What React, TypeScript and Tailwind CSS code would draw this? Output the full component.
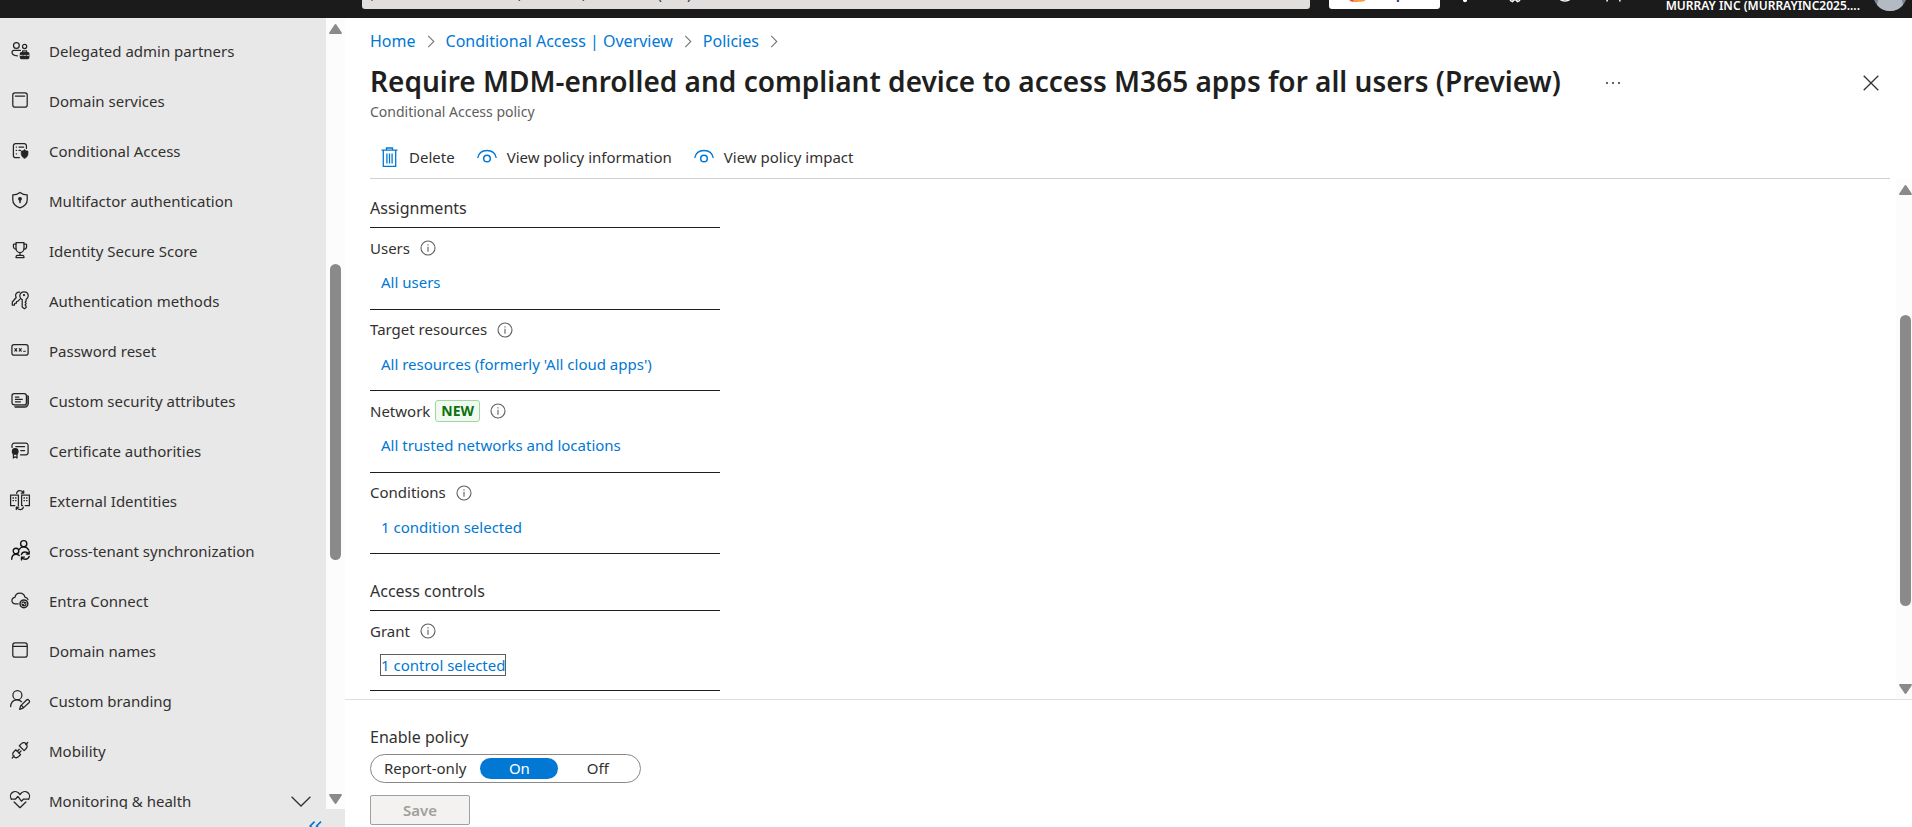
import type { ReactNode } from "react";

type IconProps = { children: ReactNode };

function NavIcon({ children }: IconProps) {
  return (
    <svg
      viewBox="0 0 20 20"
      className="size-5 shrink-0 overflow-visible"
      fill="none"
      stroke="#242424"
      strokeWidth="1.25"
      strokeLinecap="round"
      strokeLinejoin="round"
      aria-hidden="true"
    >
      {children}
    </svg>
  );
}

const navItems: { label: string; icon: ReactNode; expandable?: boolean }[] = [
  {
    label: "Delegated admin partners",
    icon: (
      <>
        <circle cx="6.4" cy="4.4" r="2.9" />
        <circle cx="14.6" cy="5.4" r="2.1" />
        <path d="M10.4 9.4H3.9A1.9 1.9 0 0 0 2 11.3c0 2.3 2 3.4 5.4 3.5" />
        <path d="M12.6 11.4V9.8h4v1.6" />
        <rect x="10.4" y="11.6" width="8.4" height="6" rx="1" fill="#242424" />
        <path d="M10.4 14.4h8.4" stroke="#e8e8e8" strokeWidth="0.8" strokeDasharray="1.8 1.5" />
      </>
    ),
  },
  {
    label: "Domain services",
    icon: (
      <>
        <rect x="2.8" y="1.8" width="14.4" height="14.4" rx="2.2" />
        <path d="M5.4 5h9.2" />
      </>
    ),
  },
  {
    label: "Conditional Access",
    icon: (
      <>
        <path d="M9.4 16.6H5.6a2.2 2.2 0 0 1-2.2-2.2V4.8a2.2 2.2 0 0 1 2.2-2.2h8.6a2.2 2.2 0 0 1 2.2 2.2v2.6" />
        <path d="M6.2 6h.3M9 6h4.6M6.2 9.4h.3M9 9.4h1.4M6.2 12.8h.3" />
        <path
          d="M14.6 8.8c1 .8 2.1 1.2 3.4 1.3v2.7c0 2.2-1.3 3.8-3.4 4.6-2.1-.8-3.4-2.4-3.4-4.6v-2.7c1.3-.1 2.4-.5 3.4-1.3z"
          fill="#242424"
          strokeWidth="0.6"
        />
      </>
    ),
  },
  {
    label: "Multifactor authentication",
    icon: (
      <>
        <path d="M10 1.4c2.2 1.6 4.6 2.4 7.2 2.5v4.9c0 3.8-2.6 6.6-7.2 8.1-4.6-1.5-7.2-4.3-7.2-8.1V3.900C5.400 3.800 7.800 3 10 1.400z" />
        <circle cx="10" cy="7.8" r="1.3" fill="#242424" />
        <path d="M10 8.6v3" strokeWidth="1.5" />
      </>
    ),
  },
  {
    label: "Identity Secure Score",
    icon: (
      <>
        <path d="M6 1.6h8v6a4 4 0 0 1-8 0z" />
        <path d="M6 3H4.200a.8.8 0 0 0-.8.8v1.600A2.800 2.800 0 0 0 6.200 8.200M14 3h1.800a.8.8 0 0 1 .8.8v1.600a2.800 2.800 0 0 1-2.800 2.800" />
        <path d="M10 11.800v2.400M6 16.600v-.6c0-1 .7-1.700 1.700-1.700h4.600c1 0 1.700.7 1.700 1.700v.6z" />
      </>
    ),
  },
  {
    label: "Authentication methods",
    icon: (
      <>
        <path d="M14 .8c2.400 0 4.200 1.700 4.200 4 0 1.600-.8 2.900-2.100 3.600v1.600l-1 1.200 1 1.300-1 1.300 1 1.300v1.300l-1.700 1.300-2.200-1.600V8.600A4.200 4.200 0 0 1 9.800 4.900C9.800 2.500 11.600.8 14 .8z" />
        <circle cx="14" cy="4" r=".5" fill="#242424" />
        <path d="M9.600 1.100C7.400.7 5.400 2.500 5.600 4.700c.1.700.3 1.300.6 1.800L2.300 11v3h2.200l.2-1.600 1.700-.2.100-1.700 1.600-.3L9.700 8.400" />
      </>
    ),
  },
  {
    label: "Password reset",
    icon: (
      <>
        <rect x="1.9" y="3.6" width="16.2" height="10.6" rx="2.2" />
        <path d="M4.800 7.700l2 2.400M6.800 7.700l-2 2.400M9.300 7.700l2 2.400M11.300 7.700l-2 2.400M13.600 10.300h1.800" strokeWidth="1.1" />
      </>
    ),
  },
  {
    label: "Custom security attributes",
    icon: (
      <>
        <rect x="2" y="2.7" width="14.4" height="11.2" rx="2.2" />
        <path d="M5.400 6h3.400M5.400 8.400h6.800M5.400 10.800h5M18.300 5.200v7.400a3.600 3.600 0 0 1-3.600 3.600H5.200" />
        <path d="M17.300 4.400v8.200a2.600 2.600 0 0 1-2.600 2.600H4.600" strokeWidth=".8" />
      </>
    ),
  },
  {
    label: "Certificate authorities",
    icon: (
      <>
        <path d="M2 6.400V4.400a2.200 2.200 0 0 1 2.200-2.200h11.700a2.200 2.200 0 0 1 2.200 2.200v7.200a2.200 2.200 0 0 1-2.200 2.200h-5.400" />
        <path d="M5.800 5.600h8.800M10.800 9.600h3.800" />
        <circle cx="5.2" cy="10.4" r="2.8" fill="#242424" />
        <path d="M3.400 12.800v4.200l1.800-1.200L7 17v-4.200" />
      </>
    ),
  },
  {
    label: "External Identities",
    icon: (
      <>
        <path d="M8.400 4H.6v10.600h4.200M8.400 4v10.600M11.600 14.600V4h7.800v10.600h-4.200M11.600 14.600h1" strokeLinejoin="miter" />
        <path d="M3 7h.4M5.600 7H6M3 9.600h.4M5.600 9.600H6M14 7h.4M16.600 7h.4M14 9.600h.4M16.600 9.600h.4" strokeWidth="1.4" />
        <path d="M6.600 2.400C7 .4 8.400-.6 10.200-.4c1.500.1 2.600 1 3.200 2.400M13.700-.2v2.400h-2.400M13.400 16.200c-.4 1.600-1.800 2.500-3.400 2.400-1.600-.1-2.700-1-3.300-2.300M6.300 18.600v-2.400h2.400" />
      </>
    ),
  },
  {
    label: "Cross-tenant synchronization",
    icon: (
      <g stroke="#111" strokeWidth="1.4">
        <circle cx="13.7" cy="2.7" r="3.1" />
        <circle cx="6" cy="10" r="2.8" />
        <path d="M1.700 18.200c.1-3 1.800-5 4.300-5 1.400 0 2.400.5 3.200 1.300M9.400 8.200c1-1.600 2.500-2.300 4.300-2.300 2.200 0 3.900 1 4.900 3" />
        <path d="M11.400 13.600c.5-1.700 2-2.700 3.900-2.600 1.400 0 2.600.7 3.500 1.800M19.200 10.200v2.900h-2.900M19.200 15.400c-.6 1.800-2 2.900-3.900 2.900-1.500 0-2.700-.7-3.500-1.900M11.500 18.900v-2.800h2.900" />
      </g>
    ),
  },
  {
    label: "Entra Connect",
    icon: (
      <>
        <path d="M8.200 12.800H5.300a3.200 3.200 0 0 1-.4-6.400C5.300 3.800 7.300 2 9.900 2s4.500 1.700 5 4.100c1.500.2 2.700 1 3.100 2.500" />
        <circle cx="13.9" cy="12.8" r="3.9" strokeWidth="1.5" />
        <path d="M11.900 12c.6-.8 1.300-1.100 2.200-1 .8 0 1.400.4 1.900 1.100h-1.600M16 13.700c-.5.8-1.200 1.200-2.100 1.100-.8 0-1.500-.4-1.900-1.100h1.600" />
      </>
    ),
  },
  {
    label: "Domain names",
    icon: (
      <>
        <rect x="2.8" y="1.8" width="14.4" height="14.4" rx="2.2" />
        <path d="M3 5.400h14" />
      </>
    ),
  },
  {
    label: "Custom branding",
    icon: (
      <>
        <circle cx="7.4" cy="4.2" r="4.5" />
        <path d="M.6 15.600c.3-3.800 2.700-6.600 6-6.800 1.900-.1 3.600.6 4.900 1.900" />
        <path d="M18.900 9.100c.9.8.8 1.900 0 2.700l-5.800 5.300-3.500 1.300 1-3.500 5.700-5.700c.8-.8 1.800-.9 2.600-.1zM11.400 14.300l2 2.200" />
      </>
    ),
  },
  {
    label: "Mobility",
    icon: (
      <>
        <path d="M17.700 1.500l-1.900 2M2.200 17l2-2.100" />
        <path d="M9.300 4.800l1.900-1.900c1.500-1.400 3.600-1.400 4.900-.1 1.400 1.300 1.400 3.500-.1 4.900L14.100 9.600zM10.600 13.600l-1.900 1.900c-1.500 1.400-3.600 1.400-4.900.1-1.400-1.300-1.400-3.500.1-4.900l1.900-1.900z" />
        <path d="M7.300 10.300l2-2M9 12l2-2" />
      </>
    ),
  },
  {
    label: "Monitoring & health",
    expandable: true,
    icon: (
      <>
        <path d="M1.300 8.200C-.2 5.600.4 2.700 2.500 1.400 5-.1 8.200.8 10 3.600 11.800.8 15-.1 17.500 1.400c2.100 1.300 2.700 4.200 1.200 6.800" />
        <path d="M1.400 8h4.200l2.200-2.600 3.600 4.800L13.600 8h5M4.100 11L10 16.700l5.900-5.700" />
      </>
    ),
  },
];

function ScrollArrow({ down = false }: { down?: boolean }) {
  return (
    <svg viewBox="0 0 13 10" className="h-[10px] w-[13px] shrink-0" fill="#8a8a8a" aria-hidden="true">
      {down ? (
        <path d="M1 0h11c.9 0 1.2.8.7 1.500L7.500 9.300c-.5.9-1.500.9-2 0L.3 1.500C-.2.8.1 0 1 0z" />
      ) : (
        <path d="M1 10h11c.9 0 1.2-.8.7-1.500L7.500.7C7-.2 6-.2 5.500.7L.3 8.500C-.2 9.200.1 10 1 10z" />
      )}
    </svg>
  );
}

function Sidebar() {
  return (
    <aside className="flex w-[345px] shrink-0 flex-col bg-[#e8e8e8]">
      <div className="flex min-h-0 flex-1">
        <nav className="min-w-0 flex-1 overflow-hidden pt-2" aria-label="Entra ID">
          <ul>
            {navItems.map((item) => (
              <li key={item.label}>
                <a href="#" className="flex h-[50px] items-center pr-[15px] pl-[10px] text-[#323130]">
                  <NavIcon>{item.icon}</NavIcon>
                  <span className="ml-[19px] flex-1 text-[15px] leading-5">{item.label}</span>
                  {item.expandable && (
                    <svg viewBox="0 0 20 11" className="h-[11px] w-5" fill="none" stroke="#323130" strokeWidth="1.3" aria-hidden="true">
                      <path d="M.6.7L10 10 19.400.7" />
                    </svg>
                  )}
                </a>
              </li>
            ))}
          </ul>
        </nav>
        <div className="flex w-[19px] flex-col items-center bg-[#fcfcfc] pt-[6px] pb-[5px]">
          <ScrollArrow />
          <div className="grow-[230] basis-0" />
          <div className="w-[11px] grow-[296] basis-0 rounded-full bg-[#8a8a8a]" />
          <div className="grow-[234] basis-0" />
          <ScrollArrow down />
        </div>
      </div>
      <div className="flex h-[18px] shrink-0 justify-end overflow-hidden pt-3 pr-[23px]">
        <button type="button" aria-label="Collapse menu" className="h-[10px]">
          <svg viewBox="0 0 13 10" className="block h-[10px] w-[13px]" fill="none" stroke="#0078d4" strokeWidth="1.7" aria-hidden="true">
            <path d="M5.600.6L1.200 5l4.400 4.400M12 .6L7.600 5l4.400 4.400" />
          </svg>
        </button>
      </div>
    </aside>
  );
}

function TopBar() {
  return (
    <header className="flex h-[18px] shrink-0 items-end overflow-hidden bg-[#1b1b1b]">
      <div className="ml-[362px] mb-[9px] flex h-8 w-[948px] items-center gap-3 rounded-[3px] bg-[#e1dfdd] px-2">
        <svg viewBox="0 0 16 16" className="size-4 overflow-visible" fill="none" stroke="#323130" strokeWidth="1.4" aria-hidden="true">
          <circle cx="10" cy="6" r="4.5" />
          <path d="M6.700 9.300L1.500 15.500" />
        </svg>
        <input
          type="text"
          aria-label="Search"
          placeholder="Search resources, services, and docs (G+/)"
          className="h-6 flex-1 bg-transparent text-[15px] text-[#323130] outline-none placeholder:text-[#323130]"
        />
      </div>
      <button
        type="button"
        className="ml-[19px] mb-[9px] flex h-8 w-[111px] items-center gap-2 rounded-[3px] bg-white pl-[20px] text-[15px] font-semibold text-[#1b3a6b]"
      >
        <svg viewBox="0 0 16 16" className="size-5" aria-hidden="true">
          <path d="M3 1h6l-2 14H3a3 3 0 0 1-3-3V4a3 3 0 0 1 3-3z" fill="#e8453c" />
          <path d="M9 1h4a3 3 0 0 1 3 3l-2 8a4 4 0 0 1-4 3H3z" fill="#ff9a3c" />
        </svg>
        Copilot
      </button>
      <div className="mb-[15px] flex items-center gap-[30px] pl-[15px]">
        <button type="button" aria-label="Notifications">
          <svg viewBox="0 0 20 20" className="block size-5 overflow-visible" fill="none" stroke="#fff" strokeWidth="1.5" aria-hidden="true">
            <path d="M4 14V8a6 6 0 0 1 12 0v6l2 2H2z" />
            <circle cx="10" cy="17.2" r="2" fill="#fff" stroke="none" />
          </svg>
        </button>
        <button type="button" aria-label="Settings">
          <svg viewBox="0 0 20 20" className="block size-5 overflow-visible" fill="none" stroke="#fff" strokeWidth="1.5" aria-hidden="true">
            <circle cx="10" cy="10" r="3" />
            <path d="M5.500 15v2.500l2 1L10 16l2.500 2.500 2-1V15" />
          </svg>
        </button>
        <button type="button" aria-label="Help">
          <svg viewBox="0 0 20 20" className="block size-5 overflow-visible" fill="none" stroke="#fff" strokeWidth="1.5" aria-hidden="true">
            <circle cx="10" cy="9.5" r="8.5" />
          </svg>
        </button>
        <button type="button" aria-label="Feedback">
          <svg viewBox="0 0 20 20" className="block size-5 overflow-visible" fill="none" stroke="#fff" strokeWidth="1.5" aria-hidden="true">
            <circle cx="9" cy="5" r="4" />
            <path d="M2 18.500c.5-5 3-7.500 7-7.500s5.500 2.500 6 7.500" />
          </svg>
        </button>
      </div>
      <div className="mr-[5px] ml-auto flex items-end gap-[13px]">
        <span className="mb-1 text-[12px] leading-4 font-semibold text-white">MURRAY INC (MURRAYINC2025....</span>
        <svg viewBox="0 0 34 34" className="mb-[7px] size-[34px]" aria-hidden="true">
          <circle cx="17" cy="17" r="17" fill="#7b879b" />
          <path d="M4 28c1-8 6-12 13-12s12 4 13 12a17 17 0 0 1-26 0z" fill="#b3bac1" />
        </svg>
      </div>
    </header>
  );
}

function Crumb({ children }: { children: ReactNode }) {
  return (
    <li className="flex items-center gap-[11px]">
      <a href="#" className="text-[#0078d4]">
        {children}
      </a>
      <svg viewBox="0 0 8 14" className="h-[13px] w-2" fill="none" stroke="#797775" strokeWidth="1.2" aria-hidden="true">
        <path d="M1 1l6 6-6 6" />
      </svg>
    </li>
  );
}

function EyeIcon() {
  return (
    <svg viewBox="0 0 20 16" className="h-4 w-5" fill="none" stroke="#0078d4" strokeWidth="1.3" aria-hidden="true">
      <path d="M.7 9C1.600 4.200 5.400 1.500 10 1.500S18.400 4.200 19.300 9" />
      <circle cx="10" cy="9.5" r="3.3" strokeWidth="1.5" />
    </svg>
  );
}

function InfoIcon() {
  return (
    <svg viewBox="0 0 16 16" className="size-4 shrink-0" fill="none" stroke="#605e5c" strokeWidth="1.1" role="img" aria-label="More information">
      <circle cx="8" cy="8" r="7" />
      <path d="M8 6.700v5M8 4.200v1.300" />
    </svg>
  );
}

function Setting({ label, value, isNew = false, focused = false }: { label: string; value: string; isNew?: boolean; focused?: boolean }) {
  return (
    <div className="flex flex-col items-start border-b border-[#201f1e]">
      <div className="mt-[9px] flex h-[22px] items-center gap-[10px] text-[15px] text-[#323130]">
        <span className="flex items-center gap-[5px]">
          {label}
          {isNew && (
            <span className="rounded-[3px] border border-[#9fd89f] bg-[#f1faf1] px-[5px] text-[14px] leading-5 font-bold text-[#0e700e]">
              NEW
            </span>
          )}
        </span>
        <InfoIcon />
      </div>
      <a
        href="#"
        className={
          focused
            ? "mt-[13px] mb-[15px] ml-[11px] text-[15px] leading-5 text-[#0078d4] outline outline-[#605e5c]"
            : "mt-[13px] ml-[11px] text-[15px] leading-5 text-[#0078d4]"
        }
      >
        {value}
      </a>
    </div>
  );
}

const modes = ["Report-only", "On", "Off"];

export default function App() {
  return (
    <div className="flex h-screen flex-col overflow-hidden bg-white font-['Segoe_UI','Noto_Sans',sans-serif] text-[#323130]">
      <TopBar />
      <div className="flex min-h-0 flex-1">
        <Sidebar />
        <main className="flex min-w-0 flex-1 flex-col">
          <div className="ml-[25px] mr-[22px] border-b border-[#d2d0ce]">
            <nav aria-label="Breadcrumb">
              <ol className="flex items-center gap-[11px] pt-[11px] text-[16px] leading-6">
                <Crumb>Home</Crumb>
                <Crumb>Conditional Access | Overview</Crumb>
                <Crumb>Policies</Crumb>
              </ol>
            </nav>
            <div className="flex items-center pt-2 pr-[11px]">
              <h1 className="text-[28px] leading-10 font-semibold text-[#201f1e]">
                Require MDM-enrolled and compliant device to access M365 apps for all users (Preview)
              </h1>
              <button type="button" aria-label="More actions" className="ml-11 pt-1">
                <svg viewBox="0 0 16 4" className="h-1 w-4" fill="#323130" aria-hidden="true">
                  <circle cx="2" cy="2" r="1" />
                  <circle cx="8" cy="2" r="1" />
                  <circle cx="14" cy="2" r="1" />
                </svg>
              </button>
              <button type="button" aria-label="Close" className="ml-auto pt-1">
                <svg viewBox="0 0 16 16" className="size-4" fill="none" stroke="#323130" strokeWidth="1.3" aria-hidden="true">
                  <path d="M.7.7l14.600 14.600M15.300.7L.7 15.300" />
                </svg>
              </button>
            </div>
            <p className="pt-px text-[14px] leading-5 text-[#605e5c]">Conditional Access policy</p>
            <div className="flex h-[56px] items-center gap-[22px] pt-[14px] pb-[1px] pl-[11px] text-[15px] leading-5">
              <button type="button" className="flex items-center gap-[11px]">
                <svg viewBox="0 0 17 20" className="h-5 w-[17px]" fill="none" stroke="#0078d4" strokeWidth="1.3" aria-hidden="true">
                  <path d="M.5 3.200h16M5.500 3V1h6v2M2.300 3.500v15.800h12.400V3.500" />
                  <path d="M5.900 6.500v10M8.500 6.500v10M11.100 6.500v10" />
                </svg>
                Delete
              </button>
              <button type="button" className="flex items-center gap-[10px]">
                <EyeIcon />
                View policy information
              </button>
              <button type="button" className="flex items-center gap-[10px]">
                <EyeIcon />
                View policy impact
              </button>
            </div>
          </div>

          <div className="flex min-h-0 flex-1">
            <div className="min-w-0 flex-1 overflow-hidden pl-[25px]">
              <div className="w-[350px]">
                <h2 className="border-b border-[#201f1e] pt-[17px] pb-[7px] text-[16px] leading-6">Assignments</h2>
                <div className="grid h-[326px] grid-rows-4">
                  <Setting label="Users" value="All users" />
                  <Setting label="Target resources" value="All resources (formerly 'All cloud apps')" />
                  <Setting label="Network" value="All trusted networks and locations" isNew />
                  <Setting label="Conditions" value="1 condition selected" />
                </div>
                <h2 className="border-b border-[#201f1e] pt-[25px] pb-[7px] text-[16px] leading-6">Access controls</h2>
                <Setting label="Grant" value="1 control selected" focused />
              </div>
            </div>
            <div className="flex w-4 flex-col items-center bg-[#fcfcfc] pt-[6px] pb-[5px] pl-[3px]">
              <ScrollArrow />
              <div className="grow-[120] basis-0" />
              <div className="w-[11px] grow-[291] basis-0 rounded-full bg-[#8a8a8a]" />
              <div className="grow-[78] basis-0" />
              <ScrollArrow down />
            </div>
          </div>

          <form className="shrink-0 border-t border-[#e1dfdd] pt-[25px] pb-[2px] pl-[25px]">
            <fieldset>
              <legend className="text-[16px] leading-6">Enable policy</legend>
              <div className="mt-[5px] flex w-[271px] rounded-full border border-[#8a8886] p-[3px] text-[15px] leading-[21px]">
                {modes.map((mode) => (
                  <label
                    key={mode}
                    className="flex-1 cursor-pointer rounded-full text-center whitespace-nowrap first:flex-none first:pr-[14px] first:pl-[10px] has-checked:w-[78px] has-checked:flex-none has-checked:bg-[#0078d4] has-checked:text-white"
                  >
                    <input type="radio" name="enable-policy" value={mode} defaultChecked={mode === "On"} className="sr-only" />
                    {mode}
                  </label>
                ))}
              </div>
            </fieldset>
            <button
              type="submit"
              disabled
              className="mt-3 block h-[30px] w-[100px] rounded-[2px] border border-[#a19f9d] bg-[#f3f2f1] text-[15px] leading-5 font-semibold text-[#a19f9d]"
            >
              Save
            </button>
          </form>
        </main>
      </div>
    </div>
  );
}
